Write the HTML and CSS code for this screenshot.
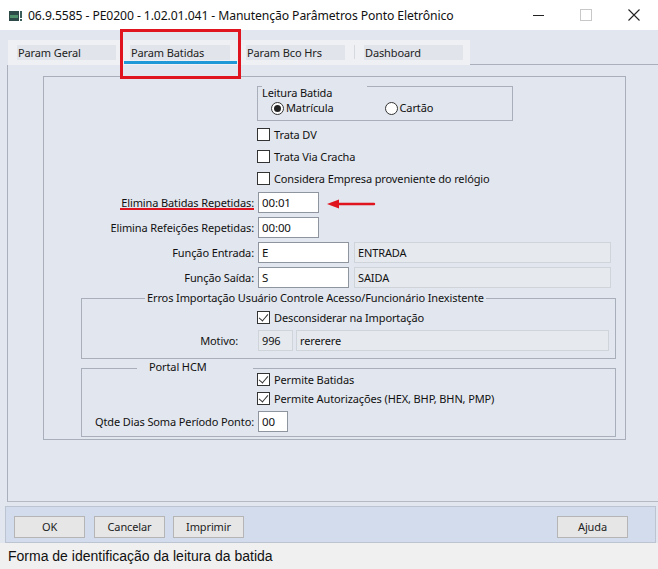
FILE: index.html
```html
<!DOCTYPE html>
<html lang="pt-BR">
<head>
<meta charset="utf-8">
<title>Manutenção Parâmetros Ponto Eletrônico</title>
<link rel="stylesheet" href="styles.css">
</head>
<body>
<div class="window">
  <div class="titlebar">
    <svg class="appicon" width="16" height="12" viewBox="0 0 16 12">
      <rect x="0" y="1" width="10" height="10" fill="#2e4a48"/>
      <rect x="1" y="5" width="8" height="3" fill="#4f8f6a"/>
      <rect x="11" y="1" width="2" height="7" fill="#3b5e5a"/>
      <rect x="11" y="9" width="2" height="2" fill="#3b5e5a"/>
    </svg>
    <span class="title">06.9.5585 - PE0200 - 1.02.01.041 - Manutenção Parâmetros Ponto Eletrônico</span>
    <div class="controls">
      <svg class="ctl" width="46" height="30" viewBox="0 0 46 30"><line x1="18" y1="15.5" x2="29" y2="15.5" stroke="#222" stroke-width="1"/></svg>
      <svg class="ctl" width="46" height="30" viewBox="0 0 46 30"><rect x="17.5" y="9.5" width="11" height="11" fill="none" stroke="#c8c8c8" stroke-width="1"/></svg>
      <svg class="ctl" width="46" height="30" viewBox="0 0 46 30"><path d="M17.5 9.5 L28.5 20.5 M28.5 9.5 L17.5 20.5" stroke="#222" stroke-width="1.1"/></svg>
    </div>
  </div>

  <div class="content">
    <div class="tabs">
      <div class="tabstrip">
        <div class="tab"><span class="tablabel">Param Geral</span></div>
        <div class="tab active"><span class="tablabel">Param Batidas</span><span class="tabbar"></span></div>
        <div class="tab"><span class="tablabel">Param Bco Hrs</span></div>
        <div class="tab last"><span class="tablabel">Dashboard</span></div>
      </div>
      <div class="tabfill"></div>
    </div>

    <div class="panel">
      <div class="inner">
        <div class="leitura">
          <div class="lhead">
            <span class="tick"></span>
            <span class="ltitle">Leitura Batida</span>
            <span class="lfill"></span>
          </div>
          <div class="radios">
            <label class="radio"><span class="rcircle checked"></span>Matrícula</label>
            <label class="radio second"><span class="rcircle"></span>Cartão</label>
          </div>
        </div>

        <div class="checks">
          <div class="check"><span class="cbox"></span>Trata DV</div>
          <div class="check"><span class="cbox"></span>Trata Via Cracha</div>
          <div class="check"><span class="cbox"></span>Considera Empresa proveniente do relógio</div>
        </div>

        <div class="fields">
          <div class="frow"><span class="flabel">Elimina Batidas Repetidas:</span><span class="input w61">00:01</span></div>
          <div class="frow"><span class="flabel">Elimina Refeições Repetidas:</span><span class="input w61">00:00</span></div>
          <div class="frow"><span class="flabel">Função Entrada:</span><span class="input w91">E</span><span class="ro w257">ENTRADA</span></div>
          <div class="frow"><span class="flabel">Função Saída:</span><span class="input w91">S</span><span class="ro w257">SAIDA</span></div>
        </div>

        <div class="group erros">
          <div class="ghead">
            <span class="gline gleft-erros"></span>
            <span class="gtitle">Erros Importação Usuário Controle Acesso/Funcionário Inexistente</span>
            <span class="gline grow"></span>
          </div>
          <div class="gbody erros-body">
            <div class="check gcheck"><span class="cbox on"></span>Desconsiderar na Importação</div>
            <div class="frow grow-row">
              <span class="glabel motivo">Motivo:</span>
              <span class="ro w35">996</span>
              <span class="ro w313">rererere</span>
            </div>
          </div>
        </div>

        <div class="group portal">
          <div class="ghead">
            <span class="gline gleft-portal"></span>
            <span class="gtitle portal-title">Portal HCM</span>
            <span class="gline grow"></span>
          </div>
          <div class="gbody portal-body">
            <div class="check pcheck"><span class="cbox on"></span>Permite Batidas</div>
            <div class="check pcheck"><span class="cbox on"></span>Permite Autorizações (HEX, BHP, BHN, PMP)</div>
            <div class="frow qtde-row">
              <span class="glabel">Qtde Dias Soma Período Ponto:</span>
              <span class="input w30">00</span>
            </div>
          </div>
        </div>
      </div>
    </div>
  </div>

  <div class="buttonbar">
    <span class="btn">OK</span>
    <span class="btn">Cancelar</span>
    <span class="btn">Imprimir</span>
    <span class="spacer"></span>
    <span class="btn">Ajuda</span>
  </div>

  <div class="status">Forma de identificação da leitura da batida</div>

  <div class="annot-rect"></div>
  <div class="annot-underline"></div>
  <svg class="annot-arrow" width="52" height="12" viewBox="0 0 52 12">
    <path d="M2 6 L14 1.5 L14 10.5 Z" fill="#e0141e"/>
    <line x1="12" y1="6" x2="49" y2="6" stroke="#e0141e" stroke-width="2.4" stroke-linecap="round"/>
  </svg>
</div>
</body>
</html>
```

FILE: styles.css
```css
* { box-sizing: border-box; }
html, body { margin: 0; padding: 0; }
body {
  width: 658px;
  height: 569px;
  overflow: hidden;
  font-family: "Noto Sans", "Open Sans", sans-serif;
  font-size: 11px;
  letter-spacing: -0.12px;
  color: #111;
  background: #e2e6ee;
}
.window {
  position: relative;
  width: 658px;
  height: 569px;
  display: flex;
  flex-direction: column;
  background: #e2e6ee;
}

/* title bar */
.titlebar {
  height: 30px;
  background: #ffffff;
  display: flex;
  align-items: center;
  padding-left: 9px;
}
.appicon { flex: none; margin-top: 1px; }
.title {
  margin-left: 3px;
  font-size: 12.2px;
  color: #111;
  white-space: nowrap;
  letter-spacing: -0.1px;
}
.controls {
  margin-left: auto;
  display: flex;
  margin-right: 1px;
}
.ctl { display: block; margin-left: 2px; }

/* content area */
.content {
  height: 476px;
  padding-top: 10px;
  padding-left: 7px;
  display: flex;
  flex-direction: column;
}
.tabs {
  display: flex;
  height: 25px;
  margin-left: 1px;
}
.tabstrip {
  display: flex;
  background: #eef0f4;
}
.tab {
  width: 116px;
  padding: 5px 0 0 8px;
  display: flex;
  flex-direction: column;
  position: relative;
}
.tab:first-child { width: 114px; padding-left: 9px; }
.tab.last { width: 116px; padding-left: 10px; }
.tab:not(:first-child)::before {
  content: "";
  position: absolute;
  left: 0;
  top: 5px;
  width: 1px;
  height: 14px;
  background: #d6d9df;
}
.tablabel {
  display: block;
  width: 99px;
  height: 15px;
  line-height: 15px;
  background: #e1e4ea;
  padding-left: 1px;
  font-size: 11px;
  color: #222;
}
.tab.active .tablabel { width: 100px; }
.tab.active { padding-left: 8px; }
.tabbar {
  display: block;
  height: 3px;
  width: 113px;
  margin-left: -6px;
  margin-top: 1px;
  background: #1e98d6;
}
.tabfill {
  flex: 1;
  border-bottom: 1px solid #a9b0bb;
}

.panel {
  height: 437px;
  border-left: 1px solid #a9b0bb;
  border-bottom: 1px solid #b4bac4;
  padding-top: 11px;
  padding-left: 35px;
}
.inner {
  width: 583px;
  height: 364px;
  border: 1px solid #a8afba;
  display: flex;
  flex-direction: column;
}

/* Leitura Batida group */
.leitura {
  margin-top: 9px;
  margin-left: 213px;
  width: 256px;
  height: 35px;
  border-left: 1px solid #a8afba;
  border-right: 1px solid #a8afba;
  border-bottom: 1px solid #a8afba;
}
.lhead {
  display: flex;
  align-items: flex-start;
  height: 14px;
}
.tick { width: 4px; border-top: 1px solid #a8afba; height: 1px; }
.ltitle {
  width: 105px;
  line-height: 14px;
  margin-top: 0;
}
.lfill { flex: 1; border-top: 1px solid #a8afba; height: 1px; }
.radios {
  display: flex;
  align-items: center;
  height: 16px;
  padding-left: 13px;
}
.radio {
  display: flex;
  align-items: center;
  line-height: 14px;
}
.radio.second { margin-left: 51px; }
.rcircle {
  width: 13px;
  height: 13px;
  border: 1px solid #333;
  border-radius: 50%;
  margin-right: 2px;
  background: #fff;
  position: relative;
  flex: none;
}
.rcircle.checked::after {
  content: "";
  position: absolute;
  left: 2px;
  top: 2px;
  width: 7px;
  height: 7px;
  border-radius: 50%;
  background: #222;
}

/* checkboxes */
.checks {
  margin-top: 2px;
  margin-left: 213px;
  display: flex;
  flex-direction: column;
}
.check {
  height: 22px;
  display: flex;
  align-items: center;
  white-space: nowrap;
}
.cbox {
  width: 13px;
  height: 13px;
  border: 1px solid #333;
  background: #fff;
  margin-right: 4px;
  flex: none;
  position: relative;
}
.cbox.on::after {
  content: "";
  position: absolute;
  left: 3px;
  top: 0px;
  width: 4px;
  height: 8px;
  border-right: 1.3px solid #333;
  border-bottom: 1.3px solid #333;
  transform: rotate(40deg);
}

/* fields */
.fields {
  margin-top: 3px;
  display: flex;
  flex-direction: column;
  gap: 4px;
}
.frow {
  display: flex;
  align-items: center;
  height: 21px;
}
.flabel {
  width: 210px;
  text-align: right;
  margin-right: 4px;
  white-space: nowrap;
}
.input {
  height: 21px;
  background: #fff;
  border: 1px solid #8f959e;
  padding-left: 3px;
  line-height: 19px;
  font-size: 11.5px;
}
.ro {
  height: 21px;
  background: #e6e9ee;
  border: 1px solid #cfd3da;
  padding-left: 3px;
  line-height: 19px;
  margin-left: 4px;
}
.w61 { width: 61px; }
.w91 { width: 91px; }
.w30 { width: 30px; }
.w257 { width: 257px; margin-left: 5px; }
.w35 { width: 35px; margin-left: 0; }
.w313 { width: 313px; margin-left: 3px; }

/* groups */
.group {
  margin-left: 37px;
  width: 535px;
  display: flex;
  flex-direction: column;
}
.erros { margin-top: 4px; }
.portal { margin-top: 3px; }
.ghead {
  display: flex;
  align-items: center;
  height: 12px;
  position: relative;
  z-index: 1;
}
.gline { height: 1px; background: #a8afba; }
.gline.grow { flex: 1; }
.gleft-erros { width: 64px; }
.gleft-portal { width: 56px; }
.gtitle {
  padding: 0 2px;
  line-height: 12px;
  white-space: nowrap;
}
.portal-title {
  width: 116px;
  padding-left: 12px;
  margin-top: -3px;
}
.gbody {
  margin-top: -6px;
  border-left: 1px solid #a8afba;
  border-right: 1px solid #a8afba;
  border-bottom: 1px solid #a8afba;
  display: flex;
  flex-direction: column;
}
.erros-body { height: 61px; padding-top: 8px; }
.gcheck, .pcheck { margin-left: 175px; }
.grow-row { margin-top: 2px; }
.glabel {
  width: 172px;
  margin-right: 4px;
  text-align: right;
  white-space: nowrap;
}
.glabel.motivo { padding-right: 16px; }
.portal-body { height: 69px; padding-top: 2px; }
.pcheck { height: 19px; }
.qtde-row { margin-top: 3px; }

/* button bar */
.buttonbar {
  margin: 0 2px 0 5px;
  height: 37px;
  background: #d3dcec;
  border: 1px solid #bcc4d2;
  display: flex;
  align-items: flex-start;
  padding: 9px 27px 0 8px;
  gap: 8px;
}
.btn {
  width: 71px;
  height: 22px;
  background: #e6e6e6;
  border: 1px solid #b5b5b5;
  text-align: center;
  line-height: 20px;
  font-size: 11px;
  color: #222;
}
.btn:nth-child(2) { margin-left: 1px; }
.spacer { flex: 1; }

.status {
  height: 26px;
  background: #f0f0f0;
  padding-left: 8px;
  line-height: 26px;
  font-family: "Liberation Sans", Arial, sans-serif;
  font-size: 14px;
  letter-spacing: 0;
  color: #111;
}

/* annotations (overlay) */
.annot-rect {
  position: absolute;
  left: 120px;
  top: 29px;
  width: 121px;
  height: 50px;
  border: 3px solid #e0141e;
}
.annot-underline {
  position: absolute;
  left: 120px;
  top: 208px;
  width: 134px;
  height: 2px;
  background: #e0141e;
}
.annot-arrow {
  position: absolute;
  left: 325px;
  top: 198px;
}
```
